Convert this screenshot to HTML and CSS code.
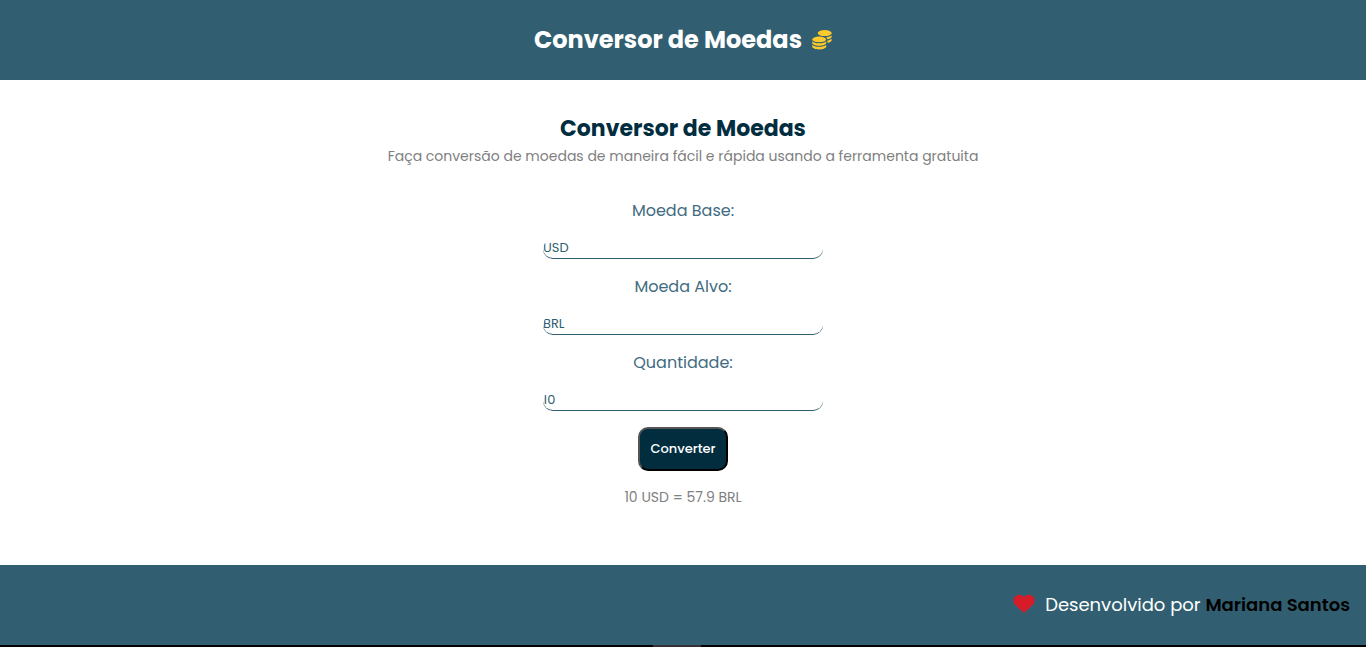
FILE: index.html
```html
<!DOCTYPE html>
<html lang="pt-BR">
<head>
<meta charset="utf-8">
<meta name="viewport" content="width=device-width, initial-scale=1">
<title>Conversor de Moedas</title>
<link rel="stylesheet" href="styles.css">
</head>
<body>
<header class="topbar">
  <h1 class="brand">Conversor de Moedas</h1>
  <svg class="coins" viewBox="0 0 20 20" aria-hidden="true">
    <ellipse cx="12.700" cy="3.100" rx="7" ry="3"/>
    <path d="M19.700 5.200V6.400C19.700 7.800 18 8.800 15.400 9.200C15.200 8.400 14.700 7.800 14 7.300C16.700 7 18.900 6.300 19.700 5.200Z"/>
    <path d="M19.700 8.800V10C19.700 11.400 18 12.400 15.400 12.800V10.500C17.400 10.200 19 9.700 19.700 8.800Z"/>
    <ellipse cx="7.200" cy="9.400" rx="7" ry="2.800"/>
    <path d="M.2 11.200C1.300 12.600 4 13.200 7.200 13.200S13.100 12.600 14.200 11.200V13C14.200 14.600 11 15.800 7.200 15.800S.2 14.600 .2 13Z"/>
    <path d="M.2 14.800C1.300 16.200 4 16.800 7.200 16.800S13.100 16.200 14.200 14.800V16.600C14.200 18.200 11 19.500 7.200 19.500S.2 18.200 .2 16.600Z"/>
  </svg>
</header>
<main class="content">
  <h2 class="title">Conversor de Moedas</h2>
  <p class="subtitle">Faça conversão de moedas de maneira fácil e rápida usando a ferramenta gratuita</p>
  <form class="converter">
    <div class="field">
      <label for="base">Moeda Base:</label>
      <input id="base" type="text" value="USD">
    </div>
    <div class="field">
      <label for="target">Moeda Alvo:</label>
      <input id="target" type="text" value="BRL">
    </div>
    <div class="field">
      <label for="amount">Quantidade:</label>
      <input id="amount" type="text" inputmode="decimal" value="10">
    </div>
    <button class="submit" type="button">Converter</button>
  </form>
  <p class="result">10 USD = 57.9 BRL</p>
</main>
<footer class="footer">
  <svg class="heart" viewBox="0 0 22 20" aria-hidden="true"><path d="M11 19L2.200 10.800C-.2 8.300 0 4.700 2.100 2.500C4.400 .1 8.300 .1 11 3C13.700 .1 17.600 .1 19.900 2.500C22 4.700 22.200 8.300 19.800 10.800Z"/></svg>
  <p>Desenvolvido por <strong>Mariana Santos</strong></p>
</footer>
<div class="edge"><span class="handle"></span></div>
</body>
</html>
```
FILE: styles.css
```css
* {
  box-sizing: border-box;
  margin: 0;
  padding: 0;
}

body {
  display: flex;
  flex-direction: column;
  min-height: 100vh;
  background: #fff;
  font-family: Poppins, Inter, sans-serif;
}

.topbar {
  display: flex;
  align-items: center;
  justify-content: center;
  gap: 10px;
  min-height: 80px;
  background: #315f71;
  color: #fff;
}

.brand {
  font-size: 24px;
  line-height: 36px;
}

.coins {
  width: 20px;
  height: 20px;
  fill: #ffca2c;
}

.content {
  display: flex;
  flex: 1;
  flex-direction: column;
  align-items: center;
  padding: 32px 16px;
  text-align: center;
}

.title {
  color: #012d3f;
  font-size: 22px;
  line-height: 34px;
}

.subtitle,
.result {
  color: #808080;
  font-size: 14px;
  line-height: 20px;
}

.converter {
  display: flex;
  flex-direction: column;
  align-items: center;
  gap: 16px;
  width: 280px;
  max-width: 100%;
  padding: 33px 0 16px;
}

.field {
  display: flex;
  flex-direction: column;
  gap: 16px;
  width: 100%;
}

.field label {
  color: #416c80;
  font-size: 16px;
  line-height: 24px;
}

.field input {
  width: 100%;
  height: 20px;
  padding-bottom: 2px;
  border: 0;
  border-bottom: 1px solid #315f71;
  border-radius: 10px;
  background: transparent;
  color: #315f71;
  font-family: inherit;
  font-size: 13px;
  outline: 0;
}

.submit {
  padding: 10px;
  border: 2px outset #000;
  border-radius: 10px;
  background: #012d3f;
  color: #fff;
  font-family: inherit;
  font-size: 13px;
  font-weight: 500;
  line-height: 20px;
}

.footer {
  display: flex;
  align-items: center;
  justify-content: flex-end;
  gap: 10px;
  min-height: 80px;
  padding: 0 16px 2px;
  background: #315f71;
  color: #fff;
  font-size: 18px;
}

.footer strong {
  color: #000;
  font-weight: 600;
}

.heart {
  width: 22px;
  height: 20px;
  fill: #d61c29;
}

.edge {
  display: flex;
  justify-content: center;
  padding-right: 12px;
  background: #000;
}

.handle {
  width: 48px;
  height: 2px;
  background: #333;
}
```
